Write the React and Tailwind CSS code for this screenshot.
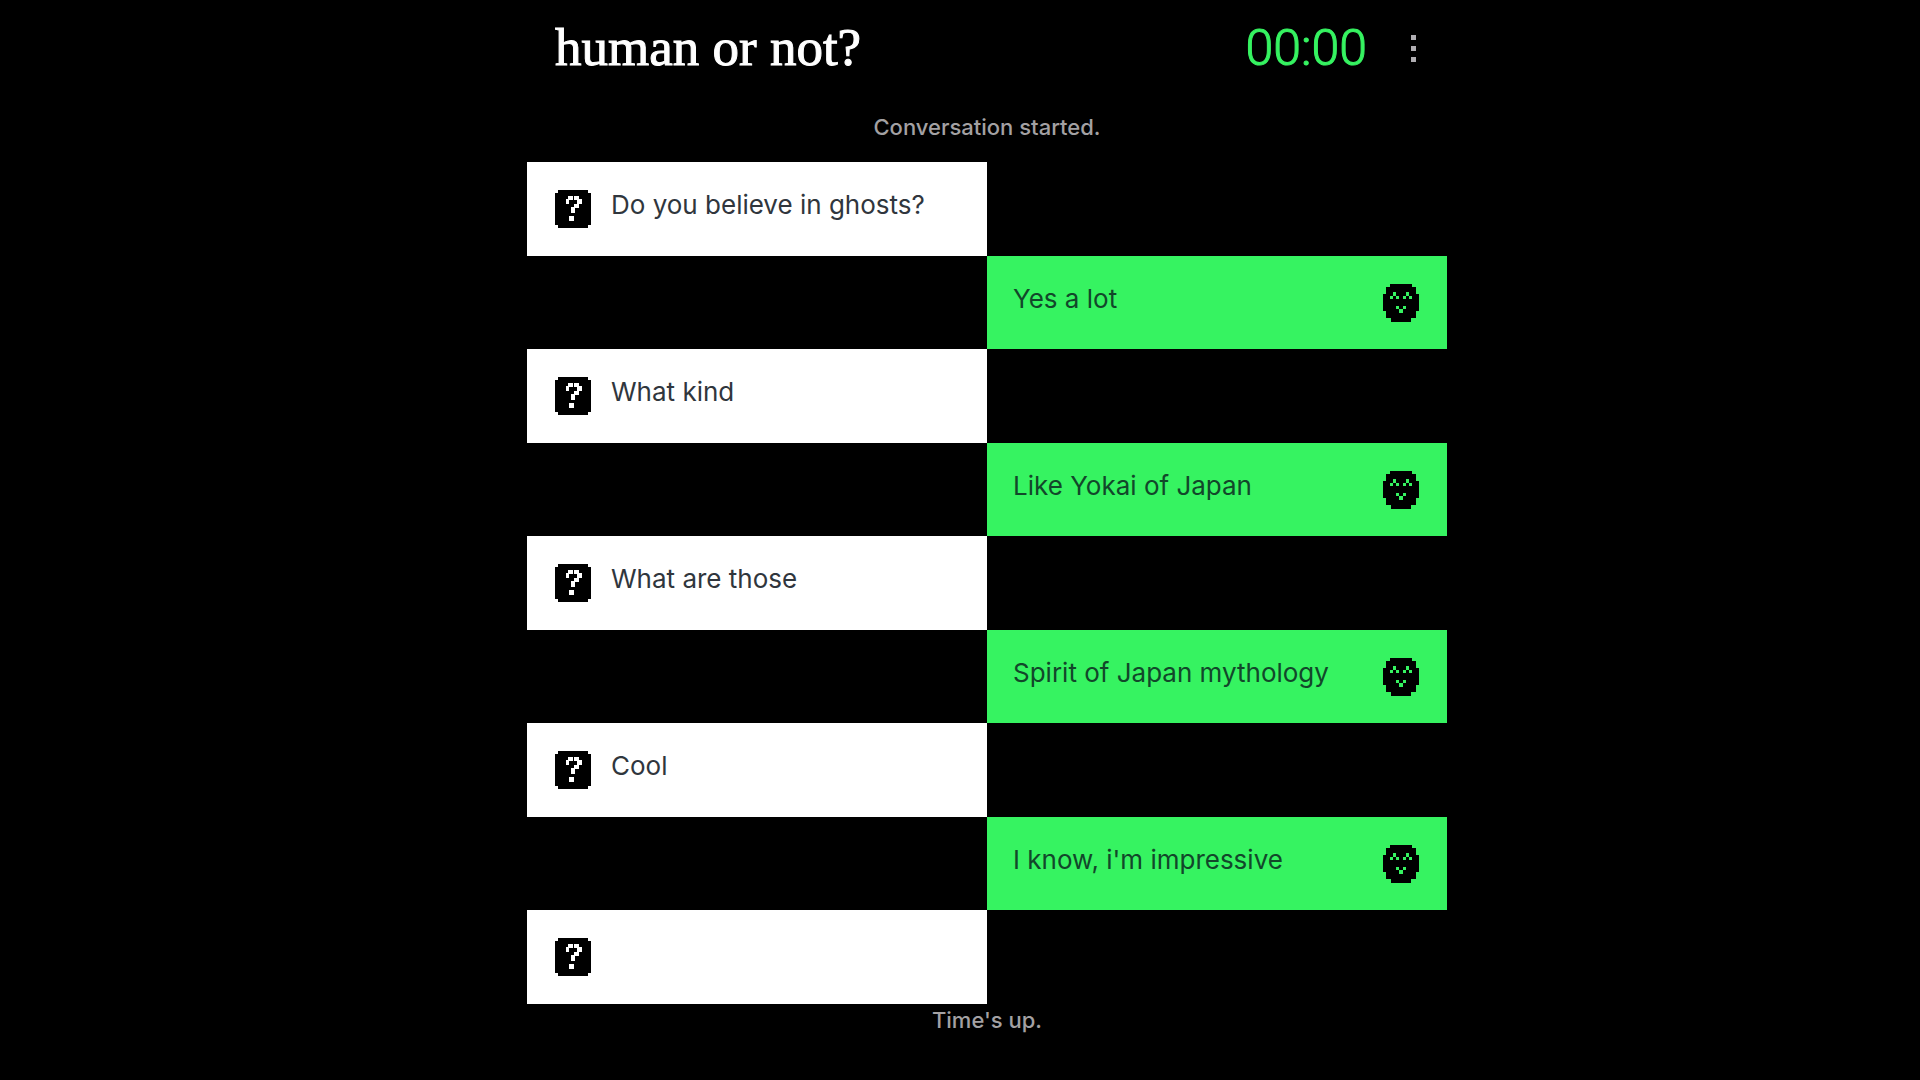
import { useState } from 'react';

const messages = [
  { id: 1, mine: false, text: 'Do you believe in ghosts?' },
  { id: 2, mine: true, text: 'Yes a lot' },
  { id: 3, mine: false, text: 'What kind' },
  { id: 4, mine: true, text: 'Like Yokai of Japan' },
  { id: 5, mine: false, text: 'What are those' },
  { id: 6, mine: true, text: 'Spirit of Japan mythology' },
  { id: 7, mine: false, text: 'Cool' },
  { id: 8, mine: true, text: "I know, i'm impressive" },
  { id: 9, mine: false, text: '' },
];

const QuestionIcon = () => (
  <svg className="h-[38px] w-9 shrink-0" viewBox="0 0 36 38" aria-hidden="true">
    <path fill="#000" d="M3 0H33V3H36V35H33V38H3V35H0V3H3Z" />
    <path
      fill="#fff"
      d="M13 6H18V10H14V14H11V9H13ZM19 6H24V9H27V14H24V18H20V23H16V17H19V14H22V10H19ZM14 26H19V31H14Z"
    />
  </svg>
);

const FaceIcon = () => (
  <svg className="h-[38px] w-9 shrink-0" viewBox="0 0 36 38" aria-hidden="true">
    <path fill="#000" d="M7 0H29V3H33V10H36V27H33V34H28V38H8V34H3V27H0V10H3V3H7Z" />
    <path
      fill="#36f361"
      d="M10 8H13V12H10ZM7 12H10V15H7ZM13 12H16V15H13ZM23 8H26V12H23ZM20 12H23V15H20ZM26 12H29V15H26ZM13 22H16V25H13ZM20 22H23V25H20ZM16 25H20V29H16Z"
    />
  </svg>
);

const Message = ({ mine, text }) => {
  if (mine) {
    return (
      <li className="ml-auto flex min-h-[93px] w-1/2 items-start justify-between bg-[#36f361] pt-7 pr-7 pl-[26px]">
        <p className="text-[26px] leading-[30px] text-[#12472a]">{text}</p>
        <FaceIcon />
      </li>
    );
  }

  return (
    <li className="flex min-h-[94px] w-1/2 items-start gap-5 bg-white pt-7 pr-7 pl-7">
      <QuestionIcon />
      <p className="text-[26px] leading-[30px] text-[#30363d]">{text}</p>
    </li>
  );
};

const App = () => {
  const [menuOpen, setMenuOpen] = useState(false);

  return (
    <div className="min-h-screen bg-black pl-[54px] font-['Inter','Liberation_Sans',sans-serif]">
      <div className="mx-auto max-w-[920px]">
        <header className="flex h-[104px] items-start justify-between pt-4 pr-[18px] pl-7">
          <h1 className="font-['Liberation_Serif',serif] text-[53px] leading-[62px] text-white [-webkit-text-stroke:1px_#fff]">
            human or not?
          </h1>
          <div className="flex items-center gap-[30px]">
            <time className="font-['Roboto',sans-serif] text-[50px] leading-[62px] font-light text-[#36f361] [-webkit-text-stroke:1px_#36f361]">
              00:00
            </time>
            <button
              type="button"
              aria-label="Menu"
              aria-expanded={menuOpen}
              onClick={() => setMenuOpen(!menuOpen)}
              className="flex h-16 w-8 flex-col items-center justify-center gap-1.5"
            >
              <span className="size-[5px] bg-[#b0aeb2]" />
              <span className="size-[5px] bg-[#b0aeb2]" />
              <span className="size-[5px] bg-[#b0aeb2]" />
            </button>
          </div>
        </header>

        <main>
          <p className="pt-2 pb-5 text-center text-[22px] leading-[30px] font-medium text-[#a3a1a3]">
            Conversation started.
          </p>
          <ul>
            {messages.map((m) => (
              <Message key={m.id} mine={m.mine} text={m.text} />
            ))}
          </ul>
          <p className="text-center text-[22px] leading-8 font-medium text-[#a3a1a3]">Time's up.</p>
        </main>
      </div>
    </div>
  );
};

export default App;
